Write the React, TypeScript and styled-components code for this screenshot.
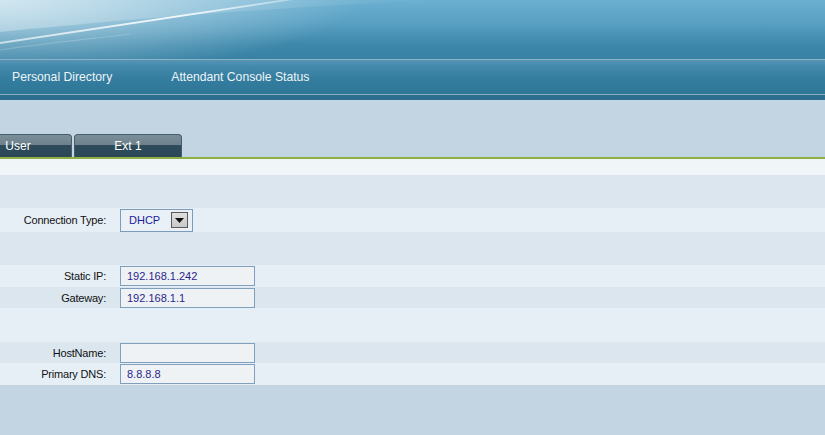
import React from "react";
import styled, { createGlobalStyle } from "styled-components";

const Global = createGlobalStyle`
  html, body { margin: 0; padding: 0; }
  body {
    background: #c3d5e3;
    font-family: "Liberation Sans", Arial, sans-serif;
    overflow: hidden;
  }
  #root { min-height: 435px; }
`;

const Page = styled.div`
  width: 825px;
  min-height: 435px;
  background: #c3d5e3;
  display: flex;
  flex-direction: column;
`;

const Banner = styled.header`
  height: 59px;
  overflow: hidden;
  background:
    radial-gradient(ellipse 360px 75px at 0 0, rgba(205, 228, 238, 0.85), rgba(205, 228, 238, 0) 100%),
    linear-gradient(to bottom, #6cb0d1 0%, #589fc2 40%, #3e88ab 75%, #3781a4 100%);
  border-bottom: 1px solid #8db2c4;
  svg { display: block; }
`;

const NavBar = styled.nav`
  height: 34px;
  display: flex;
  align-items: center;
  padding-left: 12px;
  gap: 59px;
  background: linear-gradient(to bottom, #5595b6 0%, #4289ac 20%, #357d9f 55%, #2f7797 100%);
  border-bottom: 1px solid #8eacbd;
`;

const NavLink = styled.span`
  color: #eef4f7;
  font-size: 12.2px;
  margin-top: -1px;
`;

const NavShadow = styled.div`
  height: 5px;
  background: #2c6e8d;
`;

const TabStrip = styled.div`
  display: flex;
  gap: 2px;
  margin-top: 34px;
  height: 23px;
  overflow: hidden;
`;

const Tab = styled.div<{ $offset?: number }>`
  box-sizing: border-box;
  width: 108px;
  flex: 0 0 108px;
  margin-left: ${(p) => (p.$offset ? `${p.$offset}px` : "0")};
  border: 1px solid #465d6b;
  border-bottom: none;
  border-radius: 4px 4px 0 0;
  background: linear-gradient(to bottom, #7b8f99 0%, #6d828d 44%, #2e4b5b 44%, #2b4858 100%);
  color: #ffffff;
  font-size: 12px;
  display: flex;
  align-items: center;
  justify-content: center;
  padding-bottom: 1px;
`;

const GreenRule = styled.div`
  height: 2px;
  background: #8db040;
`;

const WhiteStrip = styled.div`
  height: 16px;
  background: #f0f5f8;
`;

const Row = styled.div<{ $h: number; $light?: boolean }>`
  height: ${(p) => p.$h}px;
  background: ${(p) => (p.$light ? "#e7eff6" : "#dbe6ef")};
  display: flex;
  align-items: center;
`;

const Label = styled.label`
  width: 106px;
  flex: 0 0 106px;
  text-align: right;
  font-size: 11px;
  letter-spacing: -0.2px;
  color: #111;
  margin-right: 14px;
`;

const TextBox = styled.div`
  box-sizing: border-box;
  width: 135px;
  height: 20px;
  border: 1px solid #7f9fbd;
  background: #eef2f5;
  color: #2b1f8c;
  font-size: 11px;
  padding-left: 6px;
  display: flex;
  align-items: center;
`;

const SelectBox = styled.div`
  box-sizing: border-box;
  width: 73px;
  height: 23px;
  border: 1px solid #7d9cbb;
  background: #e9f0f6;
  color: #1c1c9c;
  font-size: 11px;
  padding-left: 8px;
  padding-right: 4px;
  display: flex;
  align-items: center;
  justify-content: space-between;
`;

const ArrowButton = styled.div`
  box-sizing: border-box;
  width: 17px;
  height: 16px;
  border: 1px solid #5a5a5a;
  background: linear-gradient(to bottom, #e0e0e0, #c8c8c8);
  display: flex;
  align-items: center;
  justify-content: center;
`;

const Swoosh = () => (
  <svg width="825" height="59" viewBox="0 0 825 59">
    <defs>
      <linearGradient id="sw" x1="0" y1="0" x2="1" y2="0">
        <stop offset="0" stopColor="#ffffff" stopOpacity="0.6" />
        <stop offset="0.6" stopColor="#ffffff" stopOpacity="0.9" />
        <stop offset="1" stopColor="#ffffff" stopOpacity="0.3" />
      </linearGradient>
      <linearGradient id="band" x1="0" y1="0" x2="1" y2="0">
        <stop offset="0" stopColor="#ffffff" stopOpacity="0.3" />
        <stop offset="1" stopColor="#ffffff" stopOpacity="0" />
      </linearGradient>
    </defs>
    <path d="M0 32 C 120 20, 260 8, 440 0 L 0 0 Z" fill="url(#band)" />
    <path d="M0 43 C 90 30, 190 14, 300 -2" stroke="url(#sw)" strokeWidth="1.8" fill="none" />
    <path d="M0 50 C 40 44, 80 40, 130 34" stroke="#ffffff" strokeOpacity="0.18" strokeWidth="1.2" fill="none" />
  </svg>
);

type Field = { label: string; value: string };

export default function App() {
  const ipFields: Field[] = [
    { label: "Static IP:", value: "192.168.1.242" },
    { label: "Gateway:", value: "192.168.1.1" },
  ];
  return (
    <Page>
      <Global />
      <Banner>
        <Swoosh />
      </Banner>
      <NavBar>
        <NavLink>Personal Directory</NavLink>
        <NavLink>Attendant Console Status</NavLink>
      </NavBar>
      <NavShadow />
      <TabStrip>
        <Tab $offset={-36}>User</Tab>
        <Tab>Ext 1</Tab>
      </TabStrip>
      <GreenRule />
      <WhiteStrip />
      <Row $h={33} />
      <Row $h={24} $light>
        <Label>Connection Type:</Label>
        <SelectBox>
          <span>DHCP</span>
          <ArrowButton>
            <svg width="9" height="5" viewBox="0 0 9 5">
              <path d="M0 0 H9 L4.5 5 Z" fill="#111" />
            </svg>
          </ArrowButton>
        </SelectBox>
      </Row>
      <Row $h={33} />
      <Row $h={22} $light>
        <Label>{ipFields[0].label}</Label>
        <TextBox>{ipFields[0].value}</TextBox>
      </Row>
      <Row $h={21}>
        <Label>{ipFields[1].label}</Label>
        <TextBox>{ipFields[1].value}</TextBox>
      </Row>
      <Row $h={34} $light />
      <Row $h={21}>
        <Label>HostName:</Label>
        <TextBox />
      </Row>
      <Row $h={22} $light>
        <Label>Primary DNS:</Label>
        <TextBox>8.8.8.8</TextBox>
      </Row>
    </Page>
  );
}
